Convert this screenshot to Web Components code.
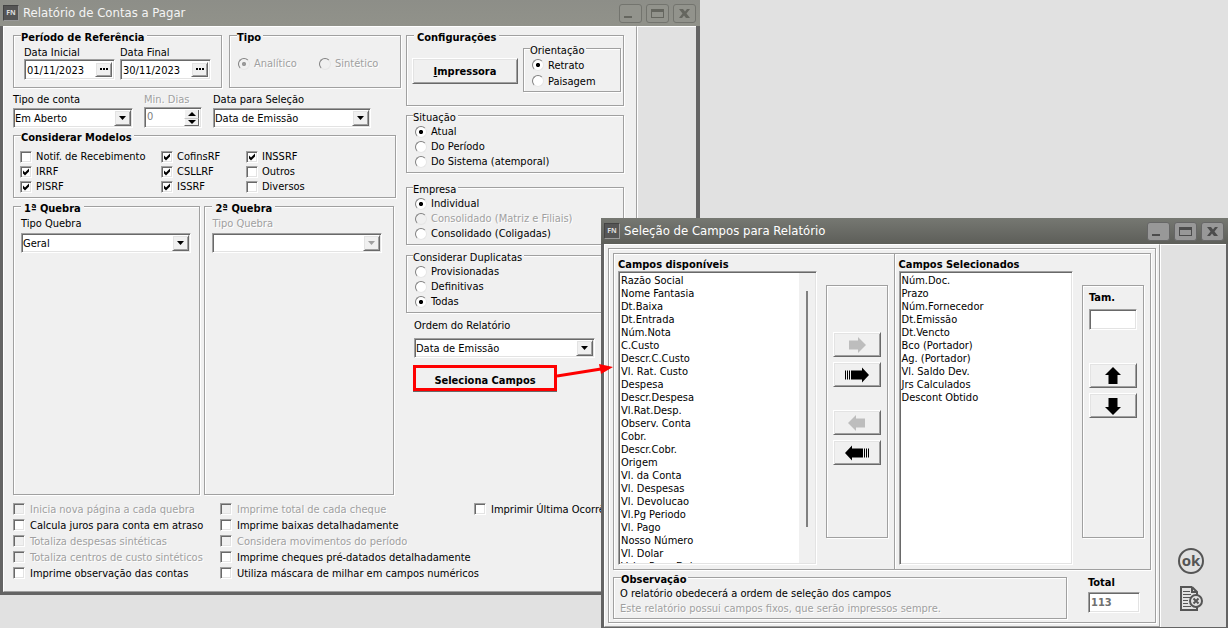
<!DOCTYPE html>
<html lang="pt-BR">
<head>
<meta charset="utf-8">
<title>Relatório de Contas a Pagar</title>
<style>
html,body{margin:0;min-height:100%}
body{background:#e1e1e1;color:#000;font:11px/13px "DejaVu Sans Condensed","Noto Sans",sans-serif;
--face:#f0f0f0;--frame:#646464;overflow:hidden}
</style>
</head>
<body>
<fn-desktop></fn-desktop>
<script>
const define=(name,build)=>customElements.define(name,class extends HTMLElement{
  connectedCallback(){
    if(this.shadowRoot)return;
    this.attachShadow({mode:'open'}).innerHTML=build(this);
  }
});
const base='*{box-sizing:border-box}input,button,select{font:inherit;color:inherit;margin:0;border-radius:0}';
const sunken='border:1px solid;border-color:#a0a0a0 #fff #fff #a0a0a0;box-shadow:inset 1px 1px #696969,inset -1px -1px #e3e3e3;background:#fff;';
const raised='border:1px solid;border-color:#fff #696969 #696969 #fff;box-shadow:inset 1px 1px #e3e3e3,inset -1px -1px #a0a0a0;background:#f0f0f0;';
const off='color:#a0a0a0;text-shadow:1px 1px #fff;';
const etched='border:1px solid #a0a0a0;box-shadow:1px 1px #fff,inset 1px 1px #fff;';

define('fn-window',el=>`<style>${base}
:host{display:flex;flex-direction:column;min-width:0;background:var(--frame)}
header{display:flex;align-items:center;height:26px;padding:0 4px 0 3px;gap:4px;color:#fff;
 background:${el.hasAttribute('inactive')?'linear-gradient(#8d8e88,#91928a)':'linear-gradient(#767872,#5d5e59)'}}
.badge{width:16px;height:16px;background:#555;border:1px solid;border-color:#444 #999 #999 #444;font:bold 7px/13px "Noto Sans",sans-serif;text-align:center;color:#ddd}
h1{flex:1;margin:0;font:13px/18px "DejaVu Sans Condensed","Noto Sans",sans-serif;white-space:nowrap;${el.hasAttribute('inactive')?'color:#f4f4f4':''}}
button{width:23px;height:19px;padding:0;border-radius:3px;border:1px solid ${el.hasAttribute('inactive')?'#73746e':'#666'};background:${el.hasAttribute('inactive')?'#92938c':'#989898'};color:${el.hasAttribute('inactive')?'#65665f':'#4c4c4c'}}
svg{display:block;width:21px;height:17px}
.body{flex:1;display:grid;grid-template-columns:minmax(0,1fr) ${el.getAttribute('side')}px;margin:0 ${el.getAttribute('edge')}px 3px 3px;background:#e1e1e1}
main{min-width:0;background:var(--face);border:1px solid;border-color:#fff #a0a0a0 #a0a0a0 #fff}
aside{border-left:1px solid #fff;border-top:1px solid #fff;display:flex;flex-direction:column}
</style>
<header><span class="badge">FN</span><h1>${el.getAttribute('heading')}</h1>
<button aria-label="Minimizar"><svg viewBox="0 0 21 17"><path d="M4 11h8v2H4z" fill="currentColor"/></svg></button>
<button aria-label="Maximizar"><svg viewBox="0 0 21 17"><path d="M4 4h13v9H4zM5 7v5h11v-5z" fill="currentColor" fill-rule="evenodd"/></svg></button>
<button aria-label="Fechar"><svg viewBox="0 0 21 17"><path d="M5 4h4l2 2.500L13 4h3l-3.500 4.500L16 13h-4l-2-2.500L8 13H5l3.500-4.500z" fill="currentColor"/></svg></button></header>
<div class="body"><main><slot></slot></main><aside><slot name="side"></slot></aside></div>`);

define('fn-group',el=>`<style>${base}
:host{display:block;min-width:0}
fieldset{height:100%;min-width:0;margin:0;padding:0;${etched}}
legend{padding:4px 2px 0 0;margin-left:6px;background:linear-gradient(transparent 7px,var(--face) 7px);line-height:13px}
:host([strong]) legend{font-weight:bold;margin-left:7px}
:host([roomy]) legend{padding:4px 3px 0 3px}
</style><fieldset><legend>${el.getAttribute('label')}</legend><slot></slot></fieldset>`);

define('fn-check',el=>`<style>${base}
:host{display:block;line-height:15px}
label{display:flex;align-items:center;gap:${el.getAttribute('gap')||5}px;height:100%;white-space:nowrap}
input{appearance:none;flex:none;width:12px;height:12px;${sunken}}
input:disabled{background:var(--face)}
input:disabled+span{${off}}
input:checked{background:#fff url("data:image/svg+xml,%3Csvg xmlns='http://www.w3.org/2000/svg' viewBox='0 0 10 10'%3E%3Cpath d='M2 3.500l2 2 4-4v3l-4 4-2-2z'/%3E%3C/svg%3E") center/10px 10px}
</style><label><input type="checkbox" ${el.hasAttribute('checked')?'checked':''} ${el.hasAttribute('disabled')?'disabled':''}><span>${el.getAttribute('label')}</span></label>`);

/* options: "Text|Text", a leading "*" selects an option and a leading "-" disables it */
define('fn-radios',el=>`<style>${base}
:host{display:grid;grid-auto-rows:${el.getAttribute('pitch')||15}px}
:host([inline]){grid-template-columns:repeat(2,81px)}
label{display:flex;align-items:center;gap:4px;white-space:nowrap}
input{appearance:none;flex:none;width:12px;height:12px;border-radius:50%;border:1px solid;border-color:#808080 #e6e6e6 #e6e6e6 #808080;background:#fff}
input:checked{background:#fff radial-gradient(circle at 50% 50%,#000 0 1.900px,transparent 2.300px)}
input:disabled{background-color:var(--face)}
input:disabled:checked{background-image:radial-gradient(circle at 50% 50%,#999 0 1.900px,transparent 2.300px)}
input:disabled+span{${off}}
</style>${el.getAttribute('options').split('|').map(o=>{
  const on=o.includes('*'),dis=o.includes('-');
  return `<label><input type="radio" name="r" ${on?'checked':''} ${dis?'disabled':''}><span>${o.replace(/[*-]/g,'')}</span></label>`}).join('')}`);

define('fn-combo',el=>`<style>${base}
:host{display:block;min-width:0}
label{display:block;margin-bottom:${el.getAttribute('space')||2}px;white-space:nowrap}
:host([disabled]) label{${off}}
div{position:relative}
select{appearance:none;display:block;width:100%;height:20px;padding:0 18px 0 1px;opacity:1;outline:0;${sunken}}
i{position:absolute;top:2px;right:2px;width:17px;height:16px;pointer-events:none;${raised}}
svg{display:block;margin:5px 0 0 4px}
</style><label for="s">${el.getAttribute('label')}</label><div><select id="s" ${el.hasAttribute('disabled')?'disabled':''}><option>${el.getAttribute('value')||''}</option></select>
<i><svg width="7" height="4"><path d="M0 0h7L3.500 4z" fill="${el.hasAttribute('disabled')?'#a0a0a0':'#000'}"/></svg></i></div>`);

define('fn-date',el=>`<style>${base}
:host{display:block;min-width:0}
label{display:block;white-space:nowrap}
div{display:flex;height:21px;padding:2px;${sunken}}
input{flex:1;width:0;min-width:0;border:0;padding:1px 0 0;background:none;outline:0}
button{width:17px;padding:0;${raised}}
svg{display:block;margin:auto}
</style><label for="d">${el.getAttribute('label')}</label><div><input id="d" value="${el.getAttribute('value')}"><button aria-label="Escolher data"><svg width="8" height="4"><path d="M0 0h2v2H0zM3 0h2v2H3zM6 0h2v2H6z"/></svg></button></div>`);

define('fn-spin',el=>`<style>${base}
:host{display:block;min-width:0}
label{display:block;margin-bottom:1px;white-space:nowrap;${off}}
div{display:flex;height:21px;padding:1px 2px 2px;${sunken}}
input{appearance:textfield;flex:1;width:0;min-width:0;border:0;padding:0 0 1px;background:none;color:#808080;outline:0}
input::-webkit-inner-spin-button{display:none}
span{display:grid;grid-template-rows:8px 8px;width:15px;padding-top:1px}
button{padding:0;display:grid;place-items:center;border:0;border-left:1px solid #fff;border-right:1px solid #696969;background:#f0f0f0}
button:last-child{border-bottom:1px solid #696969;border-top:1px solid #c8c8c8}
</style><label for="n">${el.getAttribute('label')}</label><div><input id="n" type="number" value="0" disabled><span><button aria-label="Mais"><svg width="8" height="4"><path d="M0 4h8L4 0z"/></svg></button><button aria-label="Menos"><svg width="8" height="4"><path d="M0 0h8L4 4z"/></svg></button></span></div>`);

define('fn-button',el=>`<style>${base}
:host{display:block;position:relative}
button{display:grid;place-items:center;width:100%;height:${el.getAttribute('tall')||25}px;padding:0;font-weight:bold;${raised}}
:host([marked]) button{border:3px solid #fe0000;box-shadow:0 1px #696969;padding-top:4px}
</style><button ${el.hasAttribute('disabled')?'disabled':''} ${el.hasAttribute('name')?`aria-label="${el.getAttribute('name')}"`:''}><span><slot></slot></span></button>`);

define('fn-arrow',el=>{
  const kind=el.getAttribute('kind'),bars=el.hasAttribute('bars');
  const turn={right:0,left:180,up:-90,down:90}[kind];
  return `<style>:host{display:block}svg{display:block}</style>
<svg width="24" height="20" viewBox="-12 -10 24 20"><g transform="rotate(${turn})" fill="${el.hasAttribute('dim')?'#bdbdbd':'#000'}">
${bars?'<path d="M-12-4.500h1v9h-1zM-10-4.500h1v9h-1zM-8-4.500h1v9h-1z"/><path d="M-6-4.500h11v-3l7 7.500-7 7.500v-3H-6z"/>':'<path d="M-8-4.500H1V-8L9 0 1 8V4.500H-8z"/>'}</g></svg>`});

define('fn-list',el=>`<style>${base}
:host{display:block;min-width:0}
label{display:block;font-weight:bold;height:13px;white-space:nowrap}
div{display:flex;height:294px;padding:1px;${sunken}}
select{appearance:none;flex:1;width:0;min-width:0;height:290px;padding:1px 1px 12px;border:0;background:none;outline:0;overflow:hidden;scrollbar-width:none}
option{display:block;height:13px;min-height:13px;line-height:13px;padding:0}
i{display:flex;justify-content:center;width:16px;background:var(--face)}
i::before{content:"";width:2px;height:236px;margin-top:18px;background:#808080}
</style><label for="l">${el.getAttribute('label')}</label><div><select id="l" multiple size="22">${el.getAttribute('items').split('|').map(t=>`<option>${t}</option>`).join('')}</select>${el.hasAttribute('scroll')?'<i></i>':''}</div>`);

define('fn-text',el=>`<style>${base}
:host{display:block;font-weight:bold}
label{display:block;margin-bottom:${el.getAttribute('space')}px}
input{display:block;width:100%;height:21px;padding:0 2px;color:#707070;outline:0;${sunken}}
</style><label for="t">${el.getAttribute('label')}</label><input id="t" value="${el.getAttribute('value')||''}">`);

define('fn-options',()=>`<style>${base}
:host{display:block;padding:0 12px 10px 9px}
.top{display:grid;grid-template-columns:minmax(0,1fr) 218px;gap:5px}
.row{display:grid}
.first{grid-template-columns:minmax(0,209fr) minmax(0,172fr);gap:7px}
.dates{display:grid;grid-template-columns:minmax(0,1fr) minmax(0,1fr);gap:5px;padding:2px 10px 7px}
.tipo{padding:12px 8px}
.second{grid-template-columns:minmax(0,120fr) minmax(0,58fr) minmax(0,158fr) minmax(0,19fr);column-gap:11px;padding-top:5px}
.models{margin:-1px 5px 0 0}
.checks{display:grid;grid-template-columns:141px 85px 1fr;grid-auto-rows:15px;padding:5px 6px 3px}
.breaks{grid-template-columns:minmax(0,187fr) minmax(0,189fr);gap:4px;margin-right:7px;min-height:297px}
.pad{padding:2px 7px}
.pad fn-combo{max-width:170px}
.config{height:79px}
.inner{display:grid;grid-template-columns:106px 98px;gap:5px;padding-left:5px}
.inner>fn-button{padding-top:14px}
.inner>fn-group{margin-top:-4px}
.rad{padding:0 8px 3px}
.sit{margin-top:1px}.emp{margin-top:6px}.dup{margin-top:2px}
.rad.o{padding-bottom:2px}
.order{width:181px;margin:6px 0 0 8px}
.mark{width:144px;margin:7px 0 0 7px}
.pointer{position:absolute;left:100%;top:-2px;z-index:5}
.bottom{display:grid;grid-template-columns:207px 254px minmax(0,1fr);padding-top:6px}
.bottom fn-check{height:16px}
</style>
<div class="top"><div>
<div class="row first"><fn-group strong label="Período de Referência"><div class="dates"><fn-date label="Data Inicial" value="01/11/2023"></fn-date><fn-date label="Data Final" value="30/11/2023"></fn-date></div></fn-group>
<fn-group strong label="Tipo"><div class="tipo"><fn-radios inline options="-*Analítico|-Sintético"></fn-radios></div></fn-group></div>
<div class="row second"><fn-combo label="Tipo de conta" value="Em Aberto"></fn-combo><fn-spin label="Min. Dias"></fn-spin><fn-combo label="Data para Seleção" value="Data de Emissão"></fn-combo></div>
<fn-group class="models" strong label="Considerar Modelos"><div class="checks">
<fn-check gap="4" label="Notif. de Recebimento"></fn-check><fn-check gap="4" checked label="CofinsRF"></fn-check><fn-check gap="4" checked label="INSSRF"></fn-check>
<fn-check gap="4" checked label="IRRF"></fn-check><fn-check gap="4" checked label="CSLLRF"></fn-check><fn-check gap="4" label="Outros"></fn-check>
<fn-check gap="4" checked label="PISRF"></fn-check><fn-check gap="4" checked label="ISSRF"></fn-check><fn-check gap="4" label="Diversos"></fn-check></div></fn-group>
<div class="row breaks"><fn-group strong roomy label="1ª Quebra"><div class="pad"><fn-combo space="3" label="Tipo Quebra" value="Geral"></fn-combo></div></fn-group>
<fn-group strong roomy label="2ª Quebra"><div class="pad"><fn-combo space="3" disabled label="Tipo Quebra"></fn-combo></div></fn-group></div>
</div><div>
<fn-group class="config" strong roomy label="Configurações"><div class="inner"><fn-button tall="26"><u>I</u>mpressora</fn-button>
<fn-group label="Orientação"><div class="rad o"><fn-radios pitch="16" options="*Retrato|Paisagem"></fn-radios></div></fn-group></div></fn-group>
<fn-group class="sit" label="Situação"><div class="rad"><fn-radios options="*Atual|Do Período|Do Sistema (atemporal)"></fn-radios></div></fn-group>
<fn-group class="emp" label="Empresa"><div class="rad"><fn-radios options="*Individual|-Consolidado (Matriz e Filiais)|Consolidado (Coligadas)"></fn-radios></div></fn-group>
<fn-group class="dup" label="Considerar Duplicatas"><div class="rad"><fn-radios options="Provisionadas|Definitivas|*Todas"></fn-radios></div></fn-group>
<fn-combo class="order" space="6" label="Ordem do Relatório" value="Data de Emissão"></fn-combo>
<fn-button class="mark" marked tall="26">Seleciona Campos<svg class="pointer" width="58" height="20"><path d="M0 13L44 6" stroke="#fe0000" stroke-width="3"/><path d="M42 1L56 4 44 11z" fill="#fe0000"/></svg></fn-button>
</div></div>
<div class="bottom">
<div><fn-check disabled label="Inicia nova página a cada quebra"></fn-check><fn-check label="Calcula juros para conta em atraso"></fn-check><fn-check disabled label="Totaliza despesas sintéticas"></fn-check><fn-check disabled label="Totaliza centros de custo sintéticos"></fn-check><fn-check label="Imprime observação das contas"></fn-check></div>
<div><fn-check disabled label="Imprime total de cada cheque"></fn-check><fn-check label="Imprime baixas detalhadamente"></fn-check><fn-check disabled label="Considera movimentos do período"></fn-check><fn-check label="Imprime cheques pré-datados detalhadamente"></fn-check><fn-check label="Utiliza máscara de milhar em campos numéricos"></fn-check></div>
<div><fn-check label="Imprimir Última Ocorrência"></fn-check></div></div>`);

define('fn-fields',()=>`<style>${base}
:host{display:block;padding:3px}
.outer{${etched}padding:4px 4px 3px}
.panes{display:grid;grid-template-columns:minmax(0,279fr) minmax(0,256fr);height:317px;${etched}}
.pane{display:grid;grid-template-columns:minmax(0,1fr) 62px;gap:9px;padding:4px 6px 0 4px}
.pane+.pane{border-left:1px solid #a0a0a0;box-shadow:inset 1px 0 #fff}
.tools{height:253px;margin-top:27px;padding:46px 6px 0;display:flex;flex-direction:column;gap:5px;${etched}}
.tools .gap{margin-top:18px}
.tools.size{padding-top:5px}
.size fn-text{margin-bottom:28px}
.foot{display:grid;grid-template-columns:minmax(0,1fr) 52px;gap:21px;margin-top:-1px;padding-right:11px}
.note{padding:0 6px 2px;line-height:15px;white-space:nowrap}
.note p{margin:0}
.note p+p{${off}}
.total{padding-top:7px}
</style>
<div class="outer"><div class="panes">
<div class="pane"><fn-list scroll label="Campos disponíveis" items="Razão Social|Nome Fantasia|Dt.Baixa|Dt.Entrada|Núm.Nota|C.Custo|Descr.C.Custo|Vl. Rat. Custo|Despesa|Descr.Despesa|Vl.Rat.Desp.|Observ. Conta|Cobr.|Descr.Cobr.|Origem|Vl. da Conta|Vl. Despesas|Vl. Devolucao|Vl.Pg Periodo|Vl. Pago|Nosso Número|Vl. Dolar|Valor Pago Dol"></fn-list>
<div class="tools"><fn-button disabled name="Incluir"><fn-arrow kind="right" dim></fn-arrow></fn-button><fn-button name="Incluir todos"><fn-arrow kind="right" bars></fn-arrow></fn-button><fn-button class="gap" disabled name="Remover"><fn-arrow kind="left" dim></fn-arrow></fn-button><fn-button name="Remover todos"><fn-arrow kind="left" bars></fn-arrow></fn-button></div></div>
<div class="pane"><fn-list label="Campos Selecionados" items="Núm.Doc.|Prazo|Núm.Fornecedor|Dt.Emissão|Dt.Vencto|Bco (Portador)|Ag. (Portador)|Vl. Saldo Dev.|Jrs Calculados|Descont Obtido"></fn-list>
<div class="tools size"><fn-text space="5" label="Tam."></fn-text><fn-button name="Subir"><fn-arrow kind="up"></fn-arrow></fn-button><fn-button name="Descer"><fn-arrow kind="down"></fn-arrow></fn-button></div></div>
</div>
<div class="foot"><fn-group strong label="Observação"><div class="note"><p>O relatório obedecerá a ordem de seleção dos campos</p><p>Este relatório possui campos fixos, que serão impressos sempre.</p></div></fn-group><fn-text class="total" space="3" label="Total" value="113"></fn-text></div></div>`);

define('fn-actions',()=>`<style>${base}
:host{display:flex;flex-direction:column;align-items:center;justify-content:flex-end;gap:12px;height:100%;padding:0 5px 15px 0}
button{padding:0;border:0;background:none;display:grid;place-items:center;width:26px;height:26px}
.ok{border:2px solid #555;border-radius:50%;font:bold 15px/16px "Noto Sans",sans-serif;color:#555;padding-bottom:2px}
</style><button class="ok">ok</button>
<button aria-label="Cancelar"><svg width="24" height="26" viewBox="0 0 24 26" fill="none" stroke="#555" stroke-width="2"><path d="M13 1H2v23h16v-4M13 1l5 5v5M13 1v5h5"/><path d="M4 5.500h7M4 8.500h8M4 11.500h8M4 14.500h5M4 17.500h5M4 20.500h8" stroke-width="1"/><circle cx="17" cy="15" r="6" fill="#e1e1e1"/><path d="M14.500 12.500l5 5M19.500 12.500l-5 5" stroke-width="2"/></svg></button>`);

define('fn-desktop',()=>`<style>${base}
:host{display:grid;grid-template-columns:minmax(0,601fr) minmax(0,99fr) minmax(0,528fr);grid-template-rows:218px auto auto;align-items:start}
.report{grid-area:1/1/4/3}
.dialog{grid-area:2/2/3/4;z-index:1}
</style>
<fn-window class="report" inactive side="59" edge="4" heading="Relatório de Contas a Pagar"><fn-options></fn-options></fn-window>
<fn-window class="dialog" side="66" edge="2" heading="Seleção de Campos para Relatório"><fn-fields></fn-fields><fn-actions slot="side"></fn-actions></fn-window>`);
</script>
</body>
</html>
